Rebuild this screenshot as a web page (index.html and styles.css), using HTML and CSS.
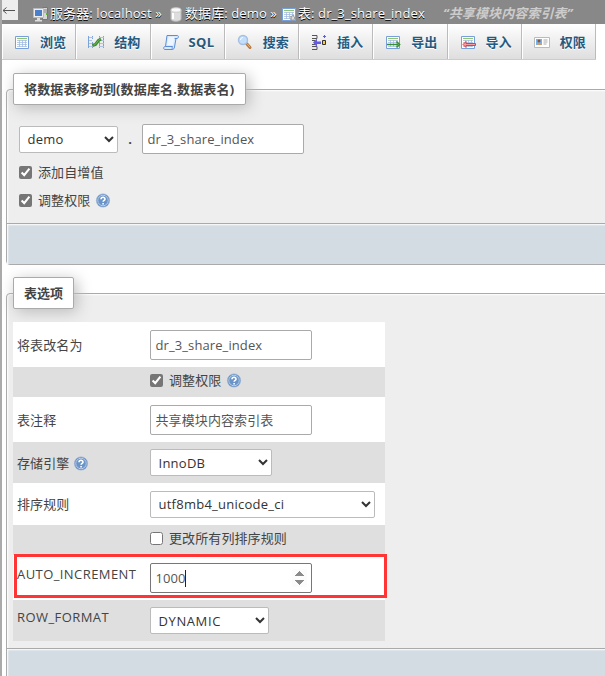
FILE: index.html
```html
<!DOCTYPE html>
<html lang="zh-CN">
<head>
<meta charset="utf-8">
<title>phpMyAdmin</title>
<link rel="stylesheet" href="styles.css">
</head>
<body>
<svg width="0" height="0" class="defs">
  <symbol id="help" viewBox="0 0 16 16"><circle cx="8" cy="8.500" r="6.600" fill="#4a78b2" stroke="#9db8da" stroke-width=".8"/><circle cx="8" cy="8.500" r="5.300" fill="#6a94c8" stroke="#d5e2f2" stroke-width=".8"/><path d="M6 7.200C6.100 4.600 10.200 4.700 10 7.200 9.900 8.500 8.100 8.400 8.100 9.800M8.100 11v1.400" fill="none" stroke="#fff" stroke-width="1.600"/></symbol>
  <symbol id="table" viewBox="0 0 16 16"><path d="M1.500 2.500h13v12h-13z" fill="#fff" stroke="#78a0d8"/><path d="M3 4.500h10" stroke="#8fc56f"/><path d="M3 6.500h10M3 8.500h10M3 10.500h10M3 12.500h10M5.500 6v7M8.500 6v7M11.500 6v7" stroke="#a5bcdf" stroke-width=".8"/></symbol>
</svg>
<div class="page">
  <div class="back"><svg width="16" height="20" viewBox="0 0 16 20"><path d="M3 10.500h12M6.500 7.500l-3.500 3 3.500 3" fill="none" stroke="#555"/></svg></div>
  <header class="crumbs">
    <svg class="ic" viewBox="0 0 16 16"><path d="M9.500 1.500h5v12h-5z" fill="#d7d7d7" stroke="#777"/><path d="M11 4h3M11 6h3" stroke="#888"/><path d="M.5 2.500h10v9H.5z" fill="#eee" stroke="#bbb"/><path d="M2 4h7v6H2z" fill="#4a7fcb"/><path d="M4 12h3v2h2v1.500H2V14h2z" fill="#ddd"/><path d="M13 7h1.500v2H13z" fill="#5b3"/></svg>
    <span class="server">服务器: localhost »</span>
    <svg class="ic" viewBox="0 0 16 16"><path d="M3 4v9c0 3 10 3 10 0V4" fill="#ddd" stroke="#bbb"/><ellipse cx="8" cy="4" rx="5" ry="2.200" fill="#fafafa" stroke="#ccc"/><path d="M5 7v6" stroke="#fff" stroke-width="2"/></svg>
    <span class="database">数据库: demo »</span>
    <svg class="ic" viewBox="0 0 16 16"><use href="#table"/><circle cx="12" cy="12" r="2.200" fill="#ddd" stroke="#999" stroke-width="1.800" stroke-dasharray="1.500 .7"/></svg>
    <span class="tablename">表: dr_3_share_index</span>
    <em>“共享模块内容索引表”</em>
  </header>
  <nav class="tabs">
    <a><svg class="ic" viewBox="0 0 16 16"><use href="#table"/></svg><b>浏览</b></a>
    <a><svg class="ic" viewBox="0 0 16 16"><path d="M.5 2v12M4.500 2v3M4.500 8v6M11.500 2v3M11.500 8v6M15.500 2v12" stroke="#7ca2dc"/><path d="M1 3.500h4M1 6.500h3M1 9.500h3M1 12.500h4M11 3.500h5M12 6.500h4M12 9.500h4M11 12.500h5" stroke="#adc3e4"/><path d="M4.500 11.500l3-1 3-4 2.500-1.500" fill="none" stroke="#3f8a38" stroke-width="3"/><path d="M5.500 11.200l2-1 3-4 2-1" fill="none" stroke="#6db955"/></svg><b>结构</b></a>
    <a><svg class="ic" viewBox="0 0 16 16"><path d="M4 1.500h10c2 0 2 2.500 0 3h-1L11.500 13c-.3 1.500-1 2.500-2 2.500H2c-2 0-1.500-3 0-3h.500z" fill="#d9e9fc" stroke="#5b8ed6"/><path d="M2.500 12.500h7c-.5 1-.5 2 0 2.800M13 4.500h-1.500" fill="none" stroke="#5b8ed6"/><path d="M5.500 3h6L10 11H4z" fill="#edf5ff"/></svg><b class="sql">SQL</b></a>
    <a><svg class="ic" viewBox="0 0 16 16"><path d="M9.500 9.500l3.500 4" stroke="#b67a43" stroke-width="3" stroke-linecap="round"/><path d="M10 9.700l3 3.500" stroke="#e5b47d"/><circle cx="6" cy="6" r="4.500" fill="#c2defa" stroke="#a5bfe2" stroke-width="1.400"/><path d="M3.500 6c0-1.500 1-2.500 2.500-2.500" fill="none" stroke="#fff"/></svg><b>搜索</b></a>
    <a><svg class="ic" viewBox="0 0 16 16"><path d="M1 1.500h5v3H1M1 6.500h3M1 10.500h3M1 15.500h5v-3H1" fill="none" stroke="#555"/><path d="M2 8.500l4-4v3h4v2.500H6v3z" fill="#625ce0"/><path d="M11.500 6.500h3v4h-3z" fill="#ffd02d" stroke="#333"/><path d="M13.500 1v3M12 2.500h3" stroke="#625ce0"/></svg><b>插入</b></a>
    <a><svg class="ic" viewBox="0 0 16 16"><use href="#table"/><path d="M2 10.500h11M11.500 7.500l3 3-3 3" fill="none" stroke="#388e35" stroke-width="1.700"/></svg><b>导出</b></a>
    <a><svg class="ic" viewBox="0 0 16 16"><use href="#table"/><path d="M6 9.500h9.500v2H6v2l-3-3 3-3z" fill="#ff9a9a" stroke="#e43e3e"/></svg><b>导入</b></a>
    <a><svg class="ic" viewBox="0 0 16 16"><path d="M.5 3.500h15v10H.5z" fill="#fff" stroke="#bbb"/><path d="M2 5h6v6H2z" fill="#77b2ed"/><circle cx="5" cy="7" r="1.500" fill="#8d5431"/><path d="M3 11c0-3 4-3 4 0" fill="#d99b62"/><path d="M9.500 6h4M9.500 8h4M9.500 10h3" stroke="#aaa"/></svg><b>权限</b></a>
  </nav>

  <main>
    <section class="box move">
      <h2 class="legend">将数据表移动到(数据库名.数据表名)</h2>
      <div class="target"><select class="db"><option>demo</option></select><b class="dot">.</b><input type="text" value="dr_3_share_index"></div>
      <label class="check"><input type="checkbox" checked><span>添加自增值</span></label>
      <label class="check"><input type="checkbox" checked><span>调整权限</span><svg class="help"><use href="#help"/></svg></label>
      <footer></footer>
    </section>
    <section class="box options">
      <h2 class="legend">表选项</h2>
      <div class="grid">
        <div class="row r45"><span>将表改名为</span><input type="text" value="dr_3_share_index"></div>
        <div class="row r30"><span></span><label class="check"><input type="checkbox" checked><span>调整权限</span><svg class="help"><use href="#help"/></svg></label></div>
        <div class="row r45"><span>表注释</span><input type="text" value="共享模块内容索引表"></div>
        <div class="row r41"><span class="withhelp">存储引擎<svg class="help"><use href="#help"/></svg></span><select class="engine"><option>InnoDB</option></select></div>
        <div class="row r42"><span>排序规则</span><select class="collation"><option>utf8mb4_unicode_ci</option></select></div>
        <div class="row r30"><span></span><label class="check"><input type="checkbox"><span>更改所有列排序规则</span></label></div>
        <div class="row r45 marked"><span class="latin">AUTO_INCREMENT</span><div class="num"><input type="number" value="1000"><i class="caret"></i></div></div>
        <div class="row r41"><span class="latin rf">ROW_FORMAT</span><select class="format"><option>DYNAMIC</option></select></div>
      </div>
      <footer></footer>
    </section>
  </main>
</div>
</body>
</html>
```
FILE: styles.css
```css
*, *::after { box-sizing: border-box; }
body { margin: 0; background: #fff; color: #444; font: 13px/18px "Open Sans", "Noto Sans CJK SC", sans-serif; }
.defs { position: absolute; }
.page { width: 605px; height: 676px; overflow: hidden; position: relative; border-left: 2px solid #aaa; }
.back { position: absolute; left: -2px; top: 0; width: 18px; height: 20px; background: #eee; }
.back svg { display: block; }
.ic { width: 16px; height: 16px; flex: none; }
.crumbs { height: 24px; background: #888; color: #fff; display: flex; align-items: center; padding: 3px 0 0 31px; white-space: nowrap; text-shadow: 0 1px 0 #000; line-height: 20px; letter-spacing: .1px; }
.crumbs span { flex: none; margin-left: 1px; }
.crumbs span, .crumbs em { position: relative; top: -1px; }
.server { width: 118px; }
.database { width: 96px; }
.tablename { width: 129px; }
.crumbs em { margin-left: 16px; font-weight: bold; color: #ccc; text-shadow: none; }
.tabs { display: flex; height: 36px; width: 594px; border-bottom: 1px solid #ccc; background: linear-gradient(#fff, #dedede); }
.tabs a { flex: 1 1 0; border-right: 1px solid #bbb; border-left: 1px solid #fff; display: flex; align-items: center; padding-left: 11px; color: #235a81; }
.tabs b { margin-left: 10px; font-size: 13px; text-shadow: 0 1px 0 #fff; white-space: nowrap; }
.tabs .sql { letter-spacing: .4px; }
main { padding: 29px 0 0 4px; }
.box { width: 650px; border: 1px solid #aaa; border-radius: 4px; background: #eee; box-shadow: 1px 1px 2px #fff inset; padding-left: 6px; display: flex; flex-direction: column; align-items: flex-start; }
.legend { margin: -17px 0 0; height: 32px; border: 1px solid #aaa; border-radius: 2px; background: #fff; box-shadow: 3px 3px 15px #bbb; font-size: 13px; line-height: 30px; padding: 0 10px; white-space: nowrap; }
.move { height: 176px; margin-bottom: 28px; }
.move .legend { width: 233px; letter-spacing: .15px; }
.options { height: 400px; }
.options .legend { width: 61px; }
.target { display: flex; align-items: center; margin: 19px 0 0 6px; height: 30px; }
.dot { width: 24px; text-align: center; }
input, select { font: inherit; margin: 0; }
input[type=text], input[type=number] { width: 162px; height: 30px; border: 1px solid #aaa; border-radius: 2px; background: #fff; color: #555; padding: 0 4.500px; outline: none; display: block; letter-spacing: .1px; }
select { height: 27px; border: 1px solid #bbb; border-radius: 2px; background: #fff; color: #333; padding: 0 4px 0 3.500px; letter-spacing: .25px; }
.db { width: 99px; }
.engine { width: 122px; }
.collation { width: 225px; }
.format { width: 119px; letter-spacing: .6px; }
.check { display: flex; align-items: center; height: 28px; letter-spacing: .1px; }
.check input { width: 13px; height: 13px; accent-color: #767676; margin-right: 6px; }
.move .check { margin-left: 6px; }
.target + .check { margin-top: 4px; }
.help { width: 16px; height: 16px; margin-left: 5px; flex: none; }
.box footer { height: 41px; width: 648px; margin: auto 0 0 -6px; border-top: 1px solid #aaa; background: #d3dce3; box-shadow: 1px 1px 2px #fff inset; flex: none; }
.grid { width: 372px; margin-top: 13px; }
.row { display: grid; grid-template-columns: 133px 1fr; align-items: center; padding-left: 4px; background: #fff; letter-spacing: .1px; }
.row:nth-child(even) { background: #dfdfdf; }
.r45 { height: 45px; }
.r42 { height: 42px; }
.r41 { height: 41px; }
.r30 { height: 30px; }
.r30 .check { height: 26px; align-self: start; }
.withhelp { display: flex; align-items: center; }
.withhelp .help { margin-left: 4px; }
.marked { position: relative; }
.marked::after { content: ""; position: absolute; left: 1px; top: -1px; width: 373px; height: 44px; border: 3px solid #ff3535; }
.latin { align-self: start; margin-top: 10px; white-space: nowrap; letter-spacing: .43px; }
.rf { margin-top: 8px; }
.num { position: relative; width: 162px; }
.num input { border-color: #777; }
.num input::-webkit-inner-spin-button { opacity: 1; }
.caret { position: absolute; left: 35px; top: 7px; width: 1px; height: 17px; background: #222; }
.options footer { flex: none; margin-top: 7px; height: 60px; }
```
